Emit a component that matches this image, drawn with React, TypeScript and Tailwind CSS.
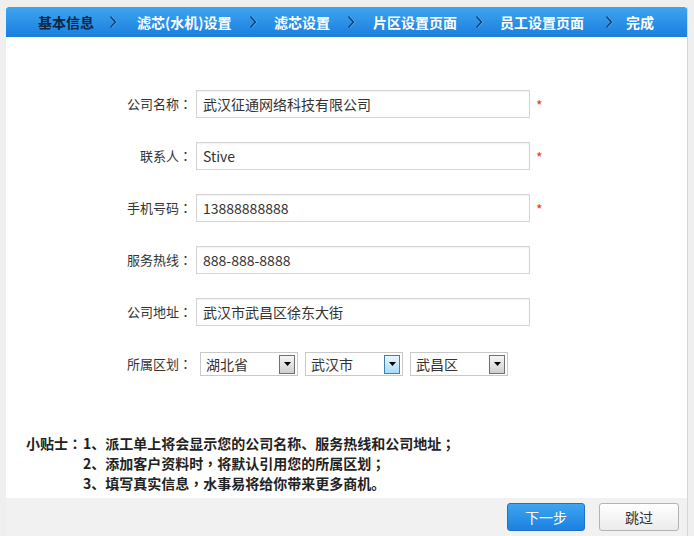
import React from "react";

const font = { fontFamily: '"Noto Sans CJK SC", "Noto Sans", sans-serif' };
const punct = { fontFamily: '"Noto Sans CJK TC", "Noto Sans CJK SC", sans-serif' };

const steps = [
  { label: "基本信息", cls: "ml-[32px] w-[57px] text-[#0b2744]", chev: "ml-[15px]" },
  { label: "滤芯(水机)设置", cls: "ml-[19px] w-[94px] text-white", chev: "ml-[19px]" },
  { label: "滤芯设置", cls: "ml-[16px] w-[57px] text-white", chev: "ml-[17px]" },
  { label: "片区设置页面", cls: "ml-[17px] w-[85px] text-white", chev: "ml-[18px]" },
  { label: "员工设置页面", cls: "ml-[16px] w-[85px] text-white", chev: "ml-[21px]" },
  { label: "完成", cls: "ml-[12px] w-[30px] text-white", chev: "" },
];

function Chevron({ className }: { className: string }) {
  return (
    <svg className={className} width="8" height="14" viewBox="0 0 8 14">
      <path d="M1.5 1.5 L6.5 7 L1.5 12.5" fill="none" stroke="#6fb6f0" strokeWidth="1.2" />
      <path d="M0.5 1.5 L5.5 7 L0.5 12.5" fill="none" stroke="#0d3f78" strokeWidth="1.5" />
    </svg>
  );
}

// punctuation centred in its box, as in the original page
function P({ c }: { c: string }) {
  return <span style={punct}>{c}</span>;
}

const fields = [
  { label: "公司名称", value: "武汉征通网络科技有限公司", req: true },
  { label: "联系人", value: "Stive", req: true },
  { label: "手机号码", value: "13888888888", req: true },
  { label: "服务热线", value: "888-888-8888", req: false },
  { label: "公司地址", value: "武汉市武昌区徐东大街", req: false },
];

function Select({ value, hover }: { value: string; hover?: boolean }) {
  return (
    <div className="flex h-[24px] w-[98px] items-center justify-between border border-[#c9c9c9] bg-white pl-[5px] pr-[2px]">
      <span className="text-[14px] text-[#333]">{value}</span>
      <span
        className={
          hover
            ? "flex h-[19px] w-[16px] items-center justify-center border border-[#3c7fb1] bg-gradient-to-b from-[#eaf6fd] to-[#a9dbf6]"
            : "flex h-[19px] w-[16px] items-center justify-center border border-[#707070] bg-gradient-to-b from-[#f6f6f6] to-[#cfcfcf]"
        }
      >
        <svg width="7" height="4" viewBox="0 0 7 4">
          <path d="M0 0 H7 L3.5 4 Z" fill="#000" />
        </svg>
      </span>
    </div>
  );
}

export default function App() {
  return (
    <div className="h-[536px] w-[694px] overflow-hidden bg-[#efefef] pl-[6px] pr-[6px] pt-[7px]" style={font}>
      <div className="flex h-[529px] flex-col border-r border-[#d6d6d6] bg-white">
        <div className="flex h-[30px] shrink-0 items-center rounded-t-[3px] bg-gradient-to-b from-[#3ca5ef] to-[#1b7edf] text-[14px] font-bold">
          {steps.map((s) => (
            <React.Fragment key={s.label}>
              <span className={`${s.cls} shrink-0 whitespace-nowrap`}>{s.label}</span>
              {s.chev && <Chevron className={`${s.chev} shrink-0`} />}
            </React.Fragment>
          ))}
        </div>

        <div className="flex-1 pt-[53px]">
          <div className="flex flex-col gap-[24px]">
            {fields.map((f) => (
              <div key={f.label} className="flex h-[28px] items-center">
                <span className="w-[186px] text-right text-[13px] text-[#333]">
                  {f.label}
                  <P c="：" />
                </span>
                <div className="ml-[4px] flex h-[28px] w-[334px] items-center border border-[#d4d4d4] pl-[6px] text-[14px] text-[#333] shadow-[inset_0_1px_2px_rgba(0,0,0,0.06)]">
                  {f.value}
                </div>
                {f.req && <span className="ml-[6px] mt-[3px] text-[14px] text-[#e2362c]">*</span>}
              </div>
            ))}
            <div className="flex h-[28px] items-center">
              <span className="w-[186px] text-right text-[13px] text-[#333]">
                所属区划
                <P c="：" />
              </span>
              <div className="ml-[8px] flex gap-[7px]">
                <Select value="湖北省" />
                <Select value="武汉市" hover />
                <Select value="武昌区" />
              </div>
            </div>
          </div>

          <div className="mt-[55px] flex pl-[20px] text-[14px] font-bold leading-[20px] text-[#222]">
            <span className="w-[57px] shrink-0">
              小贴士
              <P c="：" />
            </span>
            <div className="flex flex-col">
              <span>
                1、派工单上将会显示您的公司名称、服务热线和公司地址
                <P c="；" />
              </span>
              <span>
                2、添加客户资料时
                <P c="，" />
                将默认引用您的所属区划
                <P c="；" />
              </span>
              <span>
                3、填写真实信息
                <P c="，" />
                水事易将给你带来更多商机。
              </span>
            </div>
          </div>
        </div>

        <div className="flex h-[38px] shrink-0 items-start justify-end gap-[14px] bg-[#f1f1f1] pr-[8px] pt-[5px]">
          <button className="h-[28px] w-[78px] rounded-[3px] border border-[#1d72c8] bg-gradient-to-b from-[#3ea6ef] to-[#1b80e0] text-[14px] text-white">
            下一步
          </button>
          <button className="h-[28px] w-[80px] rounded-[3px] border border-[#b3b3b3] bg-gradient-to-b from-[#ffffff] to-[#ebebeb] text-[14px] text-[#333]">
            跳过
          </button>
        </div>
      </div>
    </div>
  );
}
